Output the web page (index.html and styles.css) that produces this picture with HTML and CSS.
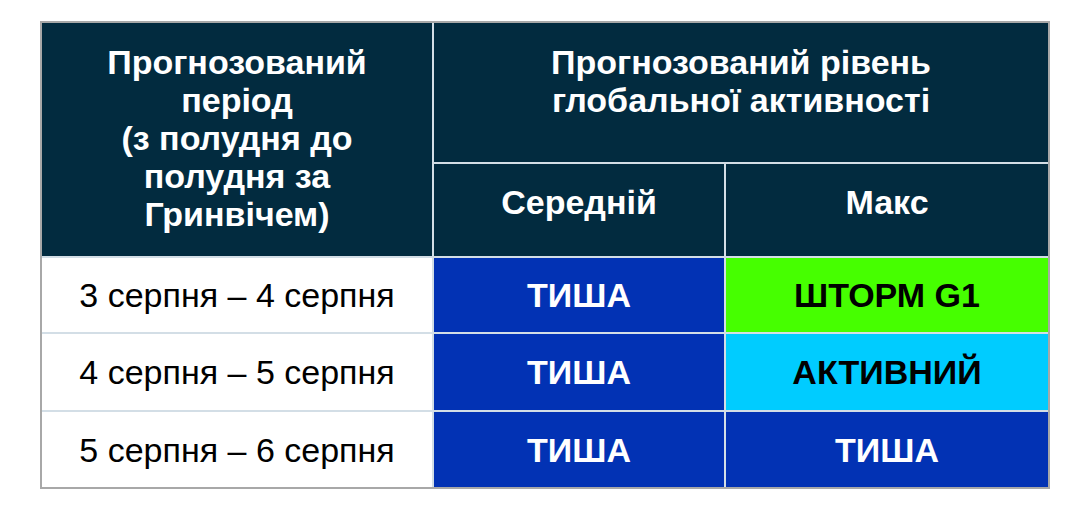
FILE: index.html
```html
<!DOCTYPE html>
<html lang="uk">
<head>
<meta charset="utf-8">
<title>Прогноз</title>
<link rel="stylesheet" href="styles.css">
</head>
<body>
<div class="frame">
  <div class="grid">
    <div class="cell head period">Прогнозований<br>період<br>(з полудня до<br>полудня за<br>Гринвічем)</div>
    <div class="cell head level">Прогнозований рівень<br>глобальної активності</div>
    <div class="cell head sub">Середній</div>
    <div class="cell head sub">Макс</div>

    <div class="cell date">3 серпня – 4 серпня</div>
    <div class="cell quiet">ТИША</div>
    <div class="cell storm">ШТОРМ G1</div>

    <div class="cell date">4 серпня – 5 серпня</div>
    <div class="cell quiet">ТИША</div>
    <div class="cell active">АКТИВНИЙ</div>

    <div class="cell date">5 серпня – 6 серпня</div>
    <div class="cell quiet">ТИША</div>
    <div class="cell quiet">ТИША</div>
  </div>
</div>
</body>
</html>
```

FILE: styles.css
```css
html, body {
  margin: 0;
  padding: 0;
  background: #ffffff;
}

body {
  font-family: "Liberation Sans", Arial, sans-serif;
}

.frame {
  margin: 21px 0 0 40px;
  width: 1006px;
  border: 2px solid #a8a8a8;
  background: #d3dee6;
}

.grid {
  display: grid;
  grid-template-columns: 390px 290px 322px;
  grid-template-rows: 139px 92px 74px 76px 75px;
  gap: 2px;
}

.cell {
  display: flex;
  align-items: center;
  justify-content: center;
  text-align: center;
  font-size: 34px;
  line-height: 38px;
}

.head {
  background: #022b3f;
  color: #ffffff;
  font-weight: bold;
}

.period {
  grid-row: 1 / span 2;
  padding-bottom: 3px;
}

.level {
  grid-column: 2 / span 2;
  align-items: flex-start;
  padding-top: 20px;
}

.sub {
  padding-bottom: 17px;
}

.date {
  background: #ffffff;
  color: #000000;
}

.quiet {
  background: #0232b4;
  color: #ffffff;
  font-weight: bold;
}

.storm {
  background: #46ff00;
  color: #000000;
  font-weight: bold;
}

.active {
  background: #00ccff;
  color: #000000;
  font-weight: bold;
}
```
